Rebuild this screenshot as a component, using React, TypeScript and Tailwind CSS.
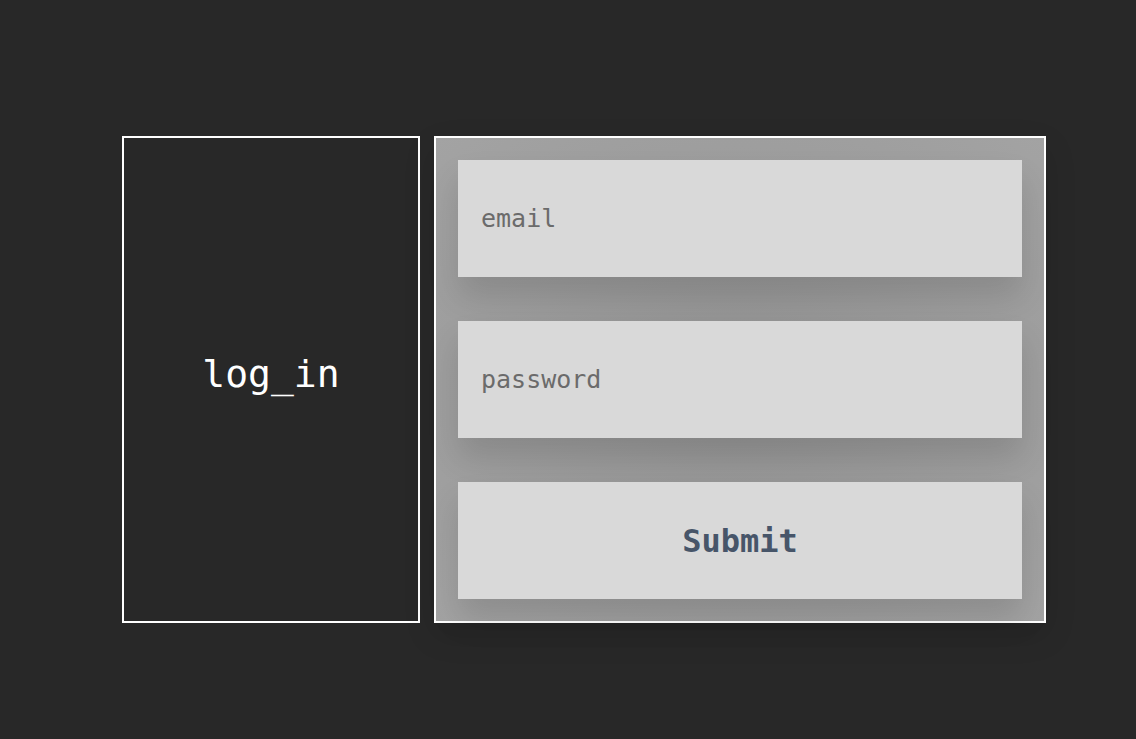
export default function App() {
  const mono = "font-['DejaVu_Sans_Mono','Liberation_Mono',monospace]";
  const field =
    "h-[117px] w-full bg-[#d9d9d9] px-[23px] text-[25px] text-[#6b6b6b] placeholder:text-[#6b6b6b] outline-none shadow-[0_20px_30px_rgba(0,0,0,0.12)]";

  return (
    <div className={`min-h-[739px] w-full bg-[#282828] pl-[122px] pt-[136px] ${mono}`}>
      <div className="flex h-[487px] gap-[14px]">
        <div className="flex w-[298px] items-center justify-center border-2 border-white bg-[#282828] pb-[10px]">
          <span className="text-[38px] text-white">log_in</span>
        </div>

        <form
          className="flex w-[612px] flex-col gap-[44px] border-2 border-white bg-[radial-gradient(ellipse_at_center,#939393,#a3a3a3)] px-[22px] pt-[22px] shadow-[0_12px_30px_rgba(0,0,0,0.12)]"
          onSubmit={(e) => e.preventDefault()}
        >
          <input type="email" placeholder="email" className={field} />
          <input type="password" placeholder="password" className={field} />
          <button
            type="submit"
            className="h-[117px] w-full bg-[#d9d9d9] text-[32px] font-bold text-[#475569] shadow-[0_20px_30px_rgba(0,0,0,0.12)]"
          >
            Submit
          </button>
        </form>
      </div>
    </div>
  );
}
